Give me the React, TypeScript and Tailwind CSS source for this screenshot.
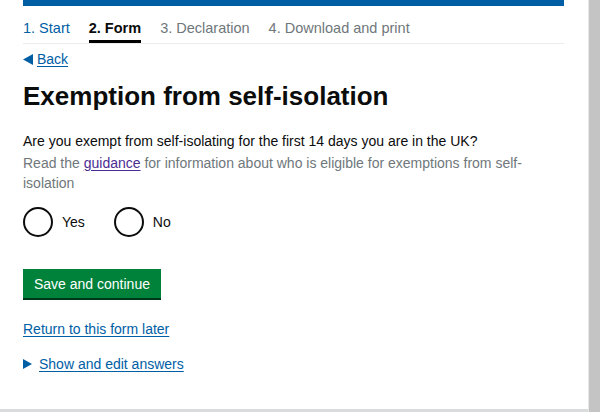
import React from "react";

export default function App() {
  const font = { fontFamily: '"Liberation Sans", Arial, sans-serif' };
  return (
    <div className="flex h-[412px] w-[600px] overflow-hidden bg-white" style={font}>
      <div className="flex h-full w-[588px] flex-col border-b-[3px] border-[#d8dcdc]">
        <div className="flex-1 pl-[23px] pr-[24px]">
          <div className="h-[6px] bg-[#005ea5]" />
          <div className="flex gap-[19px] border-b border-[#ececec] pt-[13px] text-[14.5px] leading-[18px]">
            <a className="pb-[6px] text-[#005ea5]">1. Start</a>
            <span className="border-b-[3px] border-black pb-[3px] font-bold text-[#0b0c0c]">2. Form</span>
            <span className="pb-[6px] text-[#6f777b]">3. Declaration</span>
            <span className="pb-[6px] text-[#6f777b]">4. Download and print</span>
          </div>
          <a className="mt-[6px] flex items-center gap-[4px] text-[14px] leading-[18px] text-[#005ea5]">
            <svg width="10" height="11" viewBox="0 0 10 11"><path d="M0 5.5L10 0v11z" fill="#005ea5" /></svg>
            <span className="underline underline-offset-2">Back</span>
          </a>
          <h1 className="mt-[12px] text-[26px] font-bold leading-[32px] text-[#0b0c0c]">Exemption from self-isolation</h1>
          <p className="mt-[19px] text-[14px] leading-[20px] text-[#0b0c0c]">
            Are you exempt from self-isolating for the first 14 days you are in the UK?
          </p>
          <p className="mt-[2px] text-[14px] leading-[20px] text-[#6f777b]">
            Read the <a className="text-[#4c2c92] underline underline-offset-2">guidance</a> for information about who is eligible for exemptions from self-isolation
          </p>
          <div className="mt-[14px] flex items-center gap-[29px]">
            <label className="flex items-center gap-[9px] text-[14px] text-[#0b0c0c]">
              <span className="h-[30px] w-[30px] rounded-full border-2 border-[#0b0c0c]" />
              Yes
            </label>
            <label className="flex items-center gap-[9px] text-[14px] text-[#0b0c0c]">
              <span className="h-[30px] w-[30px] rounded-full border-2 border-[#0b0c0c]" />
              No
            </label>
          </div>
          <button className="mt-[32px] bg-[#00823b] px-[11px] pt-[6px] pb-[5px] text-[14px] leading-[18px] text-white shadow-[0_2px_0_#003618]">
            Save and continue
          </button>
          <div className="mt-[19px]">
            <a className="text-[14px] leading-[20px] text-[#005ea5] underline underline-offset-2">Return to this form later</a>
          </div>
          <div className="mt-[13px] flex items-center gap-[7px] text-[14px] leading-[20px] text-[#005ea5]">
            <svg width="9" height="10" viewBox="0 0 9 10"><path d="M0 0l9 5-9 5z" fill="#005ea5" /></svg>
            <span className="underline underline-offset-2">Show and edit answers</span>
          </div>
        </div>
      </div>
      <div className="h-full w-[12px] border-l border-[#e8e8e8] bg-[#c4c4c4]" />
    </div>
  );
}
